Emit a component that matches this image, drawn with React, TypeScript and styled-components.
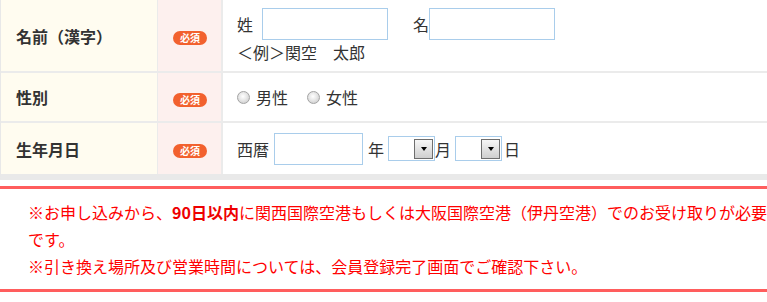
import styled, { createGlobalStyle } from 'styled-components'

const GlobalStyle = createGlobalStyle`
  html, body {
    margin: 0;
    padding: 0;
    background: #fff;
    overflow: hidden;
  }
  body {
    font-family: "Noto Sans CJK JP", "Liberation Sans", sans-serif;
    color: #333;
  }
`

const Viewport = styled.div`
  width: 100%;
  overflow: hidden;
`

const Page = styled.div`
  width: 800px;
`

const FormTable = styled.div`
  border-left: 1px solid #e8e8e8;
  border-bottom: 6px solid #e9e9e9;
`

const Row = styled.div<{ $height: number; $last?: boolean }>`
  display: grid;
  grid-template-columns: 157px 65px 1fr;
  height: ${({ $height }) => $height}px;
  border-bottom: ${({ $last }) => ($last ? 'none' : '2px solid #ebebeb')};
  box-sizing: border-box;
`

const LabelCell = styled.div`
  background: #fffcf0;
  border-right: 1px solid #ebebeb;
  display: flex;
  align-items: center;
  padding-left: 15px;
  font-size: 16px;
  font-weight: 700;
  color: #333;
`

const BadgeCell = styled.div`
  background: #fdf0ee;
  border-right: 2px solid #ebebeb;
  display: flex;
  align-items: center;
  justify-content: center;
  padding-top: 5px;
`

const Badge = styled.span`
  display: inline-flex;
  align-items: center;
  justify-content: center;
  width: 34px;
  height: 14px;
  border-radius: 7px;
  background: #f2612e;
  color: #fff;
  font-size: 10px;
  font-weight: 700;
  line-height: 1;
  margin-left: 1px;
`

const ContentCell = styled.div<{ $top?: number }>`
  padding: ${({ $top }) => $top ?? 0}px 0 0 14px;
  display: flex;
  flex-direction: column;
  justify-content: ${({ $top }) => ($top === undefined ? 'center' : 'flex-start')};
  font-size: 16px;
  color: #333;
`

const Line = styled.div`
  display: flex;
  align-items: center;
  height: 31px;
  white-space: nowrap;
`

const Note = styled.div`
  line-height: 24px;
  margin-top: 1px;
  white-space: nowrap;
`

const FieldLabel = styled.span<{ $gap?: number }>`
  margin-right: ${({ $gap }) => $gap ?? 4}px;
  line-height: 1;
`

const TextInput = styled.span<{ $width: number; $after?: number }>`
  display: inline-block;
  box-sizing: border-box;
  width: ${({ $width }) => $width}px;
  height: 32px;
  border: 1px solid #a9cdeb;
  background: #fff;
  margin-right: ${({ $after }) => $after ?? 0}px;
`

const Radio = styled.span`
  display: inline-block;
  box-sizing: border-box;
  width: 13px;
  height: 13px;
  border-radius: 50%;
  border: 1px solid #a3a3a3;
  background: radial-gradient(circle at 45% 40%, #ffffff 0%, #e6e6e6 45%, #c4c4c4 100%);
  margin-right: 6px;
`

const RadioText = styled.span`
  margin-right: 19px;
`

const SelectBox = styled.span`
  display: inline-flex;
  justify-content: flex-end;
  align-items: center;
  box-sizing: border-box;
  width: 47px;
  height: 25px;
  border: 1px solid #a9cdeb;
  background: #fff;
  padding-right: 1px;
`

const SelectButton = styled.span`
  display: inline-flex;
  align-items: center;
  justify-content: center;
  box-sizing: border-box;
  width: 19px;
  height: 20px;
  border: 1px solid #6e6e6e;
  background: linear-gradient(#f6f6f6, #cfcfcf);
`

const Arrow = styled.span`
  width: 0;
  height: 0;
  border-left: 3.5px solid transparent;
  border-right: 3.5px solid transparent;
  border-top: 4px solid #000;
  margin-top: 1px;
`

const Unit = styled.span<{ $left?: number; $right?: number }>`
  margin-left: ${({ $left }) => $left ?? 0}px;
  margin-right: ${({ $right }) => $right ?? 0}px;
  line-height: 1;
`

const Notice = styled.div`
  margin-top: 6px;
  border-top: 3px solid #ff5d5d;
  border-bottom: 3px solid #ff5d5d;
  padding: 10px 28px 9px;
  color: #ff0000;
  font-size: 16px;
  line-height: 27px;
`

const NoticeLine = styled.p`
  margin: 0;
`

const Strong = styled.strong`
  font-weight: 700;
  color: #ee0000;
`

const Select = () => (
  <SelectBox>
    <SelectButton>
      <Arrow />
    </SelectButton>
  </SelectBox>
)

export default function App() {
  return (
    <Viewport>
      <GlobalStyle />
      <Page>
        <FormTable>
          <Row $height={73}>
            <LabelCell>名前（漢字）</LabelCell>
            <BadgeCell>
              <Badge>必須</Badge>
            </BadgeCell>
            <ContentCell $top={8}>
              <Line>
                <FieldLabel $gap={9}>姓</FieldLabel>
                <TextInput $width={126} $after={25} />
                <FieldLabel $gap={0}>名</FieldLabel>
                <TextInput $width={126} />
              </Line>
              <Note>＜例＞関空　太郎</Note>
            </ContentCell>
          </Row>
          <Row $height={50}>
            <LabelCell>性別</LabelCell>
            <BadgeCell>
              <Badge>必須</Badge>
            </BadgeCell>
            <ContentCell>
              <Line>
                <Radio />
                <RadioText>男性</RadioText>
                <Radio />
                <RadioText>女性</RadioText>
              </Line>
            </ContentCell>
          </Row>
          <Row $height={51} $last>
            <LabelCell>生年月日</LabelCell>
            <BadgeCell>
              <Badge>必須</Badge>
            </BadgeCell>
            <ContentCell>
              <Line>
                <Unit $right={5}>西暦</Unit>
                <TextInput $width={89} />
                <Unit $left={5} $right={4}>年</Unit>
                <Select />
                <Unit $right={4}>月</Unit>
                <Select />
                <Unit $left={2}>日</Unit>
              </Line>
            </ContentCell>
          </Row>
        </FormTable>
        <Notice>
          <NoticeLine>
            ※お申し込みから、<Strong>90日以内</Strong>に関西国際空港もしくは大阪国際空港（伊丹空港）でのお受け取りが必要です。
          </NoticeLine>
          <NoticeLine>※引き換え場所及び営業時間については、会員登録完了画面でご確認下さい。</NoticeLine>
        </Notice>
      </Page>
    </Viewport>
  )
}
